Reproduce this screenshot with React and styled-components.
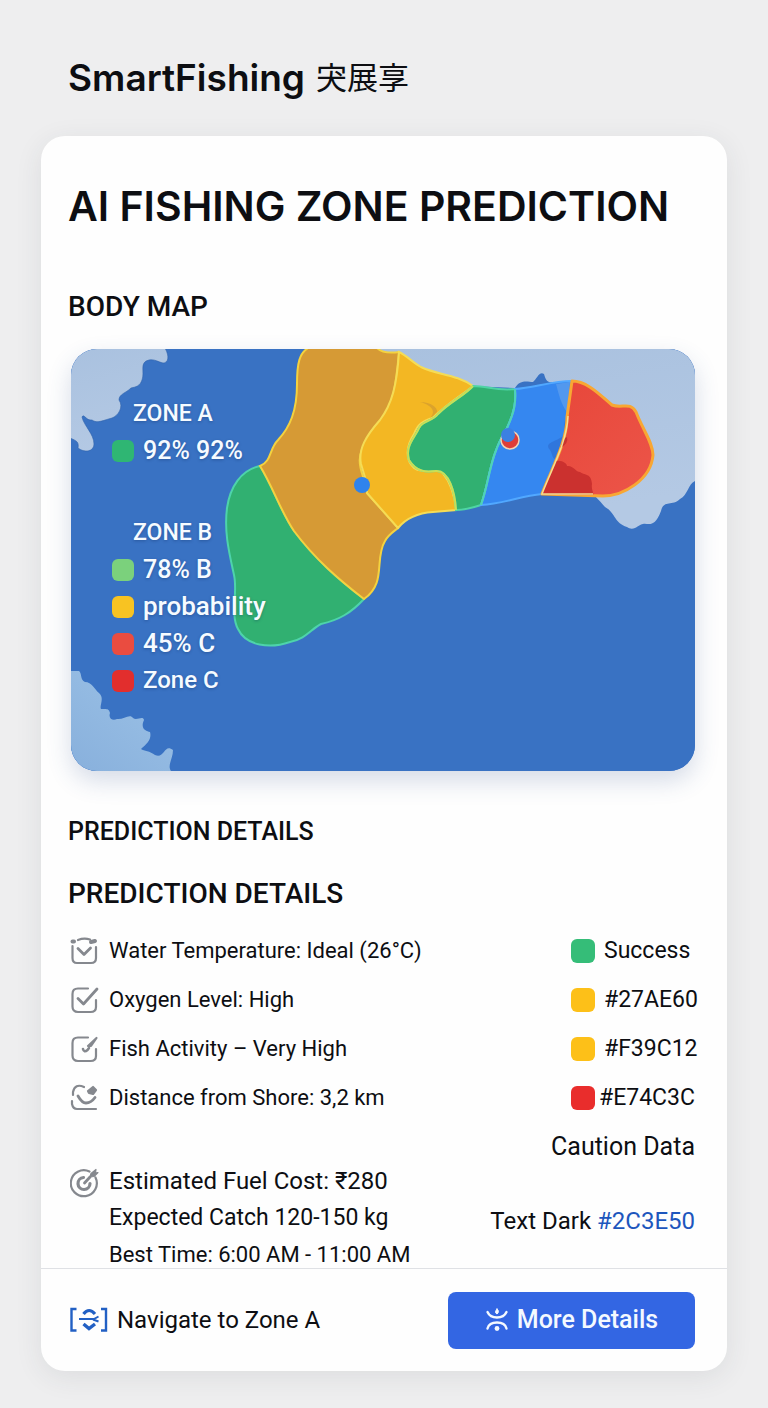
import React from "react";
import styled, { createGlobalStyle } from "styled-components";

const GlobalStyle = createGlobalStyle`
  *, *::before, *::after { box-sizing: border-box; }
  body {
    margin: 0;
    min-height: 100vh;
    background: #eeeeef;
    color: #0d0e12;
    font-family: Roboto, "Noto Sans CJK SC", sans-serif;
    font-size: 24px;
    line-height: 28px;
  }
  h1, h2, h3, p, ul { margin: 0; padding: 0; }
  ul { list-style: none; }
  svg { display: block; flex: none; }
`;

const Page = styled.div`
  padding: 52px 41px 37px 41px;
`;

const Brand = styled.header`
  display: flex;
  align-items: flex-start;
  gap: 11px;
  height: 52px;
  margin: 0 27px 32px;
`;

const BrandName = styled.span`
  font-family: Inter, sans-serif;
  font-size: 37px;
  font-weight: 600;
  line-height: 52px;
`;

const BrandScript = styled.span`
  font-family: "Noto Sans CJK JP", sans-serif;
  font-size: 31px;
  line-height: 48px;
`;

const Card = styled.main`
  background: #fefefe;
  border-radius: 24px;
  box-shadow: 0 6px 28px rgba(40, 50, 70, 0.09);
`;

const Content = styled.div`
  padding: 46px 28px 0 27px;
`;

const Title = styled.h1`
  font-family: Inter, sans-serif;
  font-size: 41px;
  font-weight: 600;
  line-height: 48px;
`;

const SectionTitle = styled.h2`
  font-size: 28px;
  font-weight: 500;
  line-height: 34px;
`;

const MapTitle = styled(SectionTitle)`
  margin: 60px 0 25px;
`;

const SectionLabel = styled.p`
  margin-bottom: 28px;
  font-size: 25px;
  font-weight: 500;
  line-height: 34px;
`;

const MapPanel = styled.section`
  position: relative;
  min-height: 422px;
  margin: 0 4px 44px 3px;
  padding: 46px 41px;
  border-radius: 26px;
  background: #3972c3;
  box-shadow: 0 10px 24px rgba(50, 80, 140, 0.2);
`;

const MapDrawing = styled.svg`
  position: absolute;
  inset: 0;
  width: 100%;
  height: 100%;
  border-radius: 26px;
`;

const Legend = styled.div`
  position: relative;
  display: grid;
  gap: 45px;
  color: #f6fbff;
  font-weight: 500;
  line-height: 37px;
  text-shadow: 0 1px 3px rgba(15, 40, 90, 0.35);
`;

const LegendName = styled.h3`
  padding-left: 21px;
  font-size: 23px;
  font-weight: 500;
`;

const LegendItem = styled.li`
  display: flex;
  align-items: center;
  gap: 9px;
  height: 37px;
  font-size: ${(p) => p.$size}px;
`;

const Swatch = styled.span`
  flex: none;
  width: ${(p) => p.$size || 22}px;
  height: ${(p) => p.$size || 22}px;
  border-radius: 6px;
  background: ${(p) => p.$color};
`;

const Details = styled.div`
  display: flex;
  justify-content: space-between;
  margin-top: 26px;
`;

const Facts = styled.ul`
  display: grid;
  gap: 21px;
`;

const Fact = styled.li`
  display: flex;
  align-items: center;
  gap: 9px;
  height: 28px;
  padding-left: 2px;
  font-size: 22px;
  white-space: nowrap;
`;

const Estimates = styled.div`
  display: flex;
  align-items: flex-start;
  gap: 9px;
  margin-top: 56px;
  padding-left: 2px;
`;

const EstimateLines = styled.div`
  display: grid;
  gap: 11px;
`;

const Estimate = styled.p`
  font-size: ${(p) => p.$size}px;
  line-height: 26px;
  white-space: nowrap;
`;

const Side = styled.div`
  display: flex;
  flex-direction: column;
  align-items: flex-end;
  white-space: nowrap;
`;

const Tokens = styled(Facts)`
  width: 128px;
`;

const Token = styled.li`
  display: flex;
  align-items: center;
  gap: ${(p) => (p.$tight ? 4 : 9)}px;
  height: 28px;
  font-size: 23px;
`;

const Caution = styled.p`
  margin: 21px 4px 46px 0;
  font-size: 25px;
`;

const TextDark = styled.p`
  margin-right: 4px;
`;

const Hex = styled.span`
  color: #1d56bd;
`;

const Footer = styled.footer`
  display: flex;
  align-items: center;
  justify-content: space-between;
  min-height: 103px;
  padding: 0 32px 0 28px;
  border-top: 1px solid #dfe1e5;
`;

const NavLink = styled.a`
  display: flex;
  align-items: center;
  gap: 8px;
  color: inherit;
  text-decoration: none;
`;

const MoreButton = styled.button`
  display: flex;
  align-items: center;
  justify-content: center;
  gap: 8px;
  width: 247px;
  height: 57px;
  border: 0;
  border-radius: 8px;
  background: #3366e3;
  color: #f4f9ff;
  font: 500 25px/28px Roboto, sans-serif;
`;

const GreyIcon = ({ children }) => (
  <svg width="30" height="30" viewBox="0 0 30 30" fill="none" stroke="#85888e" strokeWidth="2.2" strokeLinecap="round" strokeLinejoin="round" aria-hidden="true">
    {children}
  </svg>
);

const TemperatureIcon = () => (
  <GreyIcon>
    <path d="M2.500 10V22Q2.500 27 7 27H21Q26 27 26 22V11" />
    <path d="M8 4Q14 1.500 20 3.500" />
    <path d="M2.500 5.500H4M21 6L25 5" strokeWidth="4" />
    <path d="M8 12.500L14 18.500L20.500 12" strokeWidth="2.800" />
  </GreyIcon>
);

const OxygenIcon = () => (
  <GreyIcon>
    <path d="M18 3.500H8Q2.500 3.500 2.500 9V21.500Q2.500 27 8 27H20.500Q26 27 26 22V15" />
    <path d="M8 13.500L13.500 19L27 4" strokeWidth="2.800" />
  </GreyIcon>
);

const ActivityIcon = () => (
  <GreyIcon>
    <path d="M18 3.500H8Q2.500 3.500 2.500 9V21.500Q2.500 27 8 27H20.500Q26 27 26 22V15" />
    <path d="M13 15Q14 19 17.500 16L19 14" strokeWidth="2.600" />
    <path d="M18 12L26.500 4L21 12Z" fill="#85888e" />
  </GreyIcon>
);

const DistanceIcon = () => (
  <GreyIcon>
    <path d="M14 4Q5 0 3 9V12M2 18V21Q3 26 7 26H26" />
    <path d="M8 13Q12 20 16 20Q21 20 25 14.500" strokeWidth="2.800" />
    <path d="M18 8L23 4L26 7L23 11L19 10Z" fill="#85888e" />
  </GreyIcon>
);

const FuelIcon = () => (
  <GreyIcon>
    <path d="M25.500 9.500A13 13 0 1 1 19.500 3.500" />
    <path d="M20 15.500A6 6 0 1 1 13.500 9.500" strokeWidth="3.200" />
    <path d="M14.500 15L20 9" strokeWidth="2.800" />
    <path d="M20 9L21 5.500L26 1.500L25.500 5L28 4.500L24 8.500Z" fill="#85888e" strokeWidth="1.200" />
  </GreyIcon>
);

const NavigateIcon = () => (
  <svg width="40" height="28" viewBox="0 0 40 28" fill="none" stroke="#2260c4" strokeWidth="2.400" aria-hidden="true">
    <path d="M7.500 3H2.500V24.500H7.500M32 3H37V24.500H32" />
    <path d="M14.500 8Q20 1 26 8" strokeWidth="3.200" />
    <path d="M10 13H25L29.500 10.500M24 13.500L29.500 15.500" strokeWidth="2" />
    <path d="M14.500 18L20 22.500L26 18" strokeWidth="3.400" />
  </svg>
);

const MoreIcon = () => (
  <svg width="24" height="26" viewBox="0 0 24 26" fill="none" stroke="#f4f9ff" strokeWidth="2.400" strokeLinecap="round" aria-hidden="true">
    <path d="M2.500 5Q5 10.500 12 10.500Q19 10.500 21.500 5M2.500 21.500Q4 15.500 12 15.500Q20 15.500 21.500 21.500" />
    <path d="M12 2Q15 4.500 12 7Q9 5.500 12 2Z" fill="#f4f9ff" strokeWidth="1" />
    <circle cx="12" cy="21.500" r="2.400" fill="#f4f9ff" stroke="none" />
  </svg>
);

const ZoneMap = () => (
  <MapDrawing viewBox="71 349 624 422" preserveAspectRatio="xMidYMid slice" aria-hidden="true">
    <defs>
      <linearGradient id="coast" x1="0" y1="0" x2="0.3" y2="1">
        <stop offset="0" stopColor="#a9c1df" />
        <stop offset="1" stopColor="#b4c9e4" />
      </linearGradient>
      <linearGradient id="bay" x1="0.8" y1="0" x2="0" y2="1">
        <stop offset="0" stopColor="#9bc1e6" />
        <stop offset="1" stopColor="#88b0dc" />
      </linearGradient>
      <linearGradient id="redZone" x1="0" y1="0" x2="1" y2="1">
        <stop offset="0" stopColor="#e74639" />
        <stop offset="1" stopColor="#ec5549" />
      </linearGradient>
    </defs>
    <rect x="71" y="349" width="624" height="422" fill="#3972c3" />
    <path fill="url(#coast)" stroke="#2f62ab" strokeOpacity="0.6" d="M70 348H165C170 357 168 363 163 363C158 362 155 359 149 360C139 362 145 372 142 380C140 386 136 387 131 388C126 393 119 394 119 400C124 407 118 416 112 418C104 420 97 424 92 420C86 421 84 413 82 417C84 426 94 434 94 444C94 452 84 453 78 448C79 442 77 441 70 438Z" />
    <path fill="url(#bay)" d="M71 671H79C82 673 80 680 85 682C92 682 94 689 99 693C105 698 99 706 101 709C106 709 109 708 110 713C108 719 113 721 117 719C123 720 130 713 133 718C137 721 143 715 144 720C140 729 146 731 150 732C152 739 147 744 141 749C144 751 150 751 155 755C165 759 164 743 173 750C173 759 167 765 171 771H71Z" />
    <path fill="url(#coast)" d="M380 349H695V481C688 484 688 495 680 499C672 507 664 499 661 511C654 530 647 522 643 524C639 524 634 532 627 527C614 523 615 512 605 507C594 493 575 480 562 457C548 430 568 410 558 386C554 377 548 389 544 374C539 371 537 379 533 382C528 382 520 379 515 388L470 386C445 375 400 360 380 351Z" />
    <path fill="#31b071" stroke="#4ed3ab" strokeWidth="2" d="M260 466C241 470 230 487 227 508C224 532 229 552 234 575C238 592 230 615 238 629C246 646 270 649 290 642C306 639 311 629 321 624C339 620 351 613 364 599C338 579 315 559 294 531C281 512 273 487 260 466Z" />
    <path fill="#d69a35" stroke="#f4d23f" strokeWidth="2" d="M310 347C299 352 297 364 297 384C297 411 290 427 278 440C269 449 272 461 260 466C273 487 281 512 294 531C315 559 338 579 364 599C387 583 374 559 385 541C388 535 393 532 398 528L367 493C365 472 351 465 368 437C395 407 395 392 399 352C392 353 382 354 376 347Z" />
    <path fill="#f3b723" stroke="#f5dc55" strokeWidth="2" d="M399 352C397 385 392 404 380 420C366 436 358 449 361 464L367 484V493L398 528C407 517 418 513 433 512L456 510C455 496 450 482 442 472C434 465 423 475 414 468C405 460 406 446 414 434C420 418 430 421 435 416C449 402 461 396 473 386C456 374 437 375 421 367C412 362 406 355 399 352Z" />
    <path fill="#dba32c" d="M420 402C431 402 438 408 437 412C433 415 434 416 430 418C437 411 431 405 420 402Z" />
    <path fill="#31b071" stroke="#4fd4a4" strokeWidth="2" d="M473 386C488 386 496 391 515 389C516 401 515 411 507 428C489 457 490 480 481 505C472 508 466 510 456 510C455 493 449 470 436 471C427 472 417 473 409 460C405 446 414 439 419 428C423 420 432 422 438 414C450 402 465 395 473 386Z" />
    <path fill="none" stroke="#c9df55" strokeWidth="2" d="M456 510C455 493 449 470 436 471C427 472 417 473 409 460C405 446 414 439 419 428C423 420 432 422 438 414C450 402 465 395 473 386" />
    <path fill="#3587f0" stroke="#51a8ff" strokeWidth="2" d="M515 389C533 388 552 381 572 381L567 417C567 447 552 470 542 494C520 496 504 504 481 505C490 480 489 457 507 428C515 411 516 401 515 389Z" />
    <path fill="none" stroke="#4fd4b4" strokeWidth="2" d="M515 389C516 401 515 411 507 428C489 457 490 480 481 505" />
    <path fill="#5f9fec" opacity="0.7" d="M556 384L570 382L567 412C561 404 559 395 556 384Z" />
    <path fill="#2d6bcf" opacity="0.6" d="M567 415C561 428 568 435 560 438C554 442 544 443 550 450C553 455 552 459 556 459L567 431Z" />
    <path fill="url(#redZone)" stroke="#f8a733" strokeWidth="3" strokeLinejoin="round" d="M572 381C588 381 602 397 612 405C622 409 630 401 636 412C643 430 653 443 653 455C651 480 623 496 603 496L542 494C552 468 567 442 567 417Z" />
    <path fill="#cb312f" d="M556 461C563 460 567 464 567 466C573 465 576 472 580 472C586 476 591 473 592 484C591 489 594 493 593 495L542 494Z" />
    <path fill="#c8332f" d="M560 448Q564 437 567 437Q569 444 560 448Z" />
    <path fill="none" stroke="#f4dc92" strokeWidth="1.500" d="M568 416C567 442 552 468 542 494H593" />
    <circle cx="510" cy="440" r="9" fill="#de3d38" stroke="#f2d3b3" strokeWidth="1.500" />
    <circle cx="508" cy="435" r="7" fill="#3b80e2" />
    <circle cx="362" cy="485" r="8" fill="#2f83ec" />
  </MapDrawing>
);

const facts = [
  [TemperatureIcon, "Water Temperature: Ideal (26°C)"],
  [OxygenIcon, "Oxygen Level: High"],
  [ActivityIcon, "Fish Activity – Very High"],
  [DistanceIcon, "Distance from Shore: 3,2 km"],
];

const estimates = [
  [24, "Estimated Fuel Cost: ₹280"],
  [23, "Expected Catch 120-150 kg"],
  [22, "Best Time: 6:00 AM - 11:00 AM"],
];

const tokens = [
  ["#35bd78", "Success"],
  ["#fdc018", "#27AE60"],
  ["#fdc018", "#F39C12"],
  ["#e92d2c", "#E74C3C", true],
];

const legend = [
  ["ZONE A", [["#2fb673", "92% 92%", 25]]],
  [
    "ZONE B",
    [
      ["#7bd17c", "78% B", 25],
      ["#f8c322", "probability", 26],
      ["#ea4c40", "45% C", 26],
      ["#e22e2d", "Zone C", 24],
    ],
  ],
];

export default function App() {
  return (
    <>
      <GlobalStyle />
      <Page>
        <Brand>
          <BrandName>SmartFishing</BrandName>
          <BrandScript lang="ja">宊展享</BrandScript>
        </Brand>
        <Card>
          <Content>
            <Title>AI FISHING ZONE PREDICTION</Title>
            <MapTitle>BODY MAP</MapTitle>
            <MapPanel>
              <ZoneMap />
              <Legend>
                {legend.map(([name, items]) => (
                  <div key={name}>
                    <LegendName>{name}</LegendName>
                    <ul>
                      {items.map(([color, label, size]) => (
                        <LegendItem key={label} $size={size}>
                          <Swatch $color={color} />
                          {label}
                        </LegendItem>
                      ))}
                    </ul>
                  </div>
                ))}
              </Legend>
            </MapPanel>
            <SectionLabel>PREDICTION DETAILS</SectionLabel>
            <SectionTitle>PREDICTION DETAILS</SectionTitle>
            <Details>
              <div>
                <Facts>
                  {facts.map(([Icon, label]) => (
                    <Fact key={label}>
                      <Icon />
                      {label}
                    </Fact>
                  ))}
                </Facts>
                <Estimates>
                  <FuelIcon />
                  <EstimateLines>
                    {estimates.map(([size, label]) => (
                      <Estimate key={label} $size={size}>{label}</Estimate>
                    ))}
                  </EstimateLines>
                </Estimates>
              </div>
              <Side>
                <Tokens>
                  {tokens.map(([color, label, tight]) => (
                    <Token key={label} $tight={tight}>
                      <Swatch $color={color} $size={24} />
                      {label}
                    </Token>
                  ))}
                </Tokens>
                <Caution>Caution Data</Caution>
                <TextDark>
                  Text Dark <Hex>#2C3E50</Hex>
                </TextDark>
              </Side>
            </Details>
          </Content>
          <Footer>
            <NavLink href="#zone-a">
              <NavigateIcon />
              Navigate to Zone A
            </NavLink>
            <MoreButton type="button">
              <MoreIcon />
              More Details
            </MoreButton>
          </Footer>
        </Card>
      </Page>
    </>
  );
}
